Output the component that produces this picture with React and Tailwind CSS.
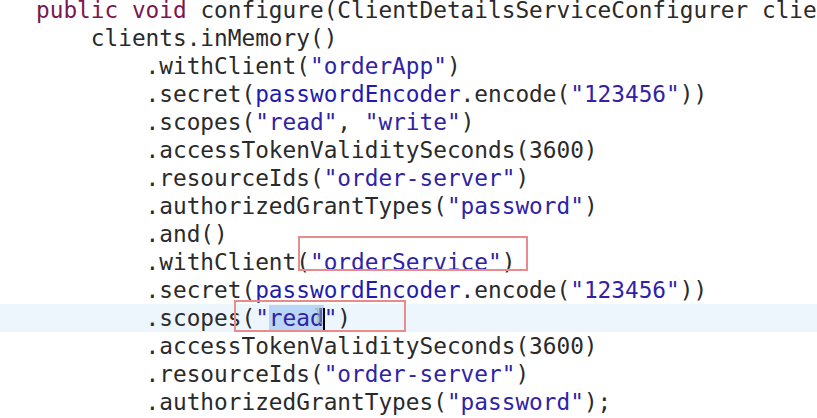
import React from "react";

const K = ({ children }) => <span className="text-[#7a1650]">{children}</span>;
const S = ({ children }) => <span className="text-[#2f22a6]">{children}</span>;
const F = ({ children }) => <span className="text-[#1f1bb0]">{children}</span>;

function Line({ children, hl, first }) {
  return (
    <div
      className={
        "whitespace-pre pl-[36px] " +
        (first ? "h-[24px] leading-[20px] " : "h-[28px] ") +
        (hl ? "bg-[#edf6fd]" : "")
      }
    >
      {children}
    </div>
  );
}

export default function App() {
  return (
    <div className="relative w-[817px] h-[418px] overflow-hidden bg-white">
      <div
        className="text-[22.75px] leading-[28px] text-[#2a2a2a]"
        style={{ fontFamily: '"DejaVu Sans Mono", monospace' }}
      >
        <Line first>
          <K>public</K> <K>void</K> configure(ClientDetailsServiceConfigurer clie
        </Line>
        <Line>{"    clients.inMemory()"}</Line>
        <Line>
          {"        .withClient("}<S>"orderApp"</S>)
        </Line>
        <Line>
          {"        .secret("}<F>passwordEncoder</F>.encode(<S>"123456"</S>))
        </Line>
        <Line>
          {"        .scopes("}<S>"read"</S>, <S>"write"</S>)
        </Line>
        <Line>{"        .accessTokenValiditySeconds(3600)"}</Line>
        <Line>
          {"        .resourceIds("}<S>"order-server"</S>)
        </Line>
        <Line>
          {"        .authorizedGrantTypes("}<S>"password"</S>)
        </Line>
        <Line>{"        .and()"}</Line>
        <Line>
          {"        .withClient("}<S>"orderService"</S>)
        </Line>
        <Line>
          {"        .secret("}<F>passwordEncoder</F>.encode(<S>"123456"</S>))
        </Line>
        <Line hl>
          {"        .scopes("}<S>"</S>
          <span className="relative bg-[#b9d6f5] text-[#2f22a6]">
            read
            <span className="absolute right-[-1px] top-[3px] h-[22px] w-[2px] bg-black" />
          </span>
          <S>"</S>)
        </Line>
        <Line>{"        .accessTokenValiditySeconds(3600)"}</Line>
        <Line>
          {"        .resourceIds("}<S>"order-server"</S>)
        </Line>
        <Line>
          {"        .authorizedGrantTypes("}<S>"password"</S>);
        </Line>
      </div>

      <div className="absolute left-[298px] top-[236px] w-[230px] h-[35px] border-2 border-[#e98b8d]" />
      <div className="absolute left-[234px] top-[300px] w-[172px] h-[32px] border-2 border-[#e98b8d]" />

      <svg className="absolute left-[314px] top-[308px]" width="10" height="16" viewBox="0 0 10 16">
        <path d="M1 1h3v14H1M9 1H6v14h3M4 8h2" fill="none" stroke="#9aa" strokeWidth="1" />
      </svg>
    </div>
  );
}
